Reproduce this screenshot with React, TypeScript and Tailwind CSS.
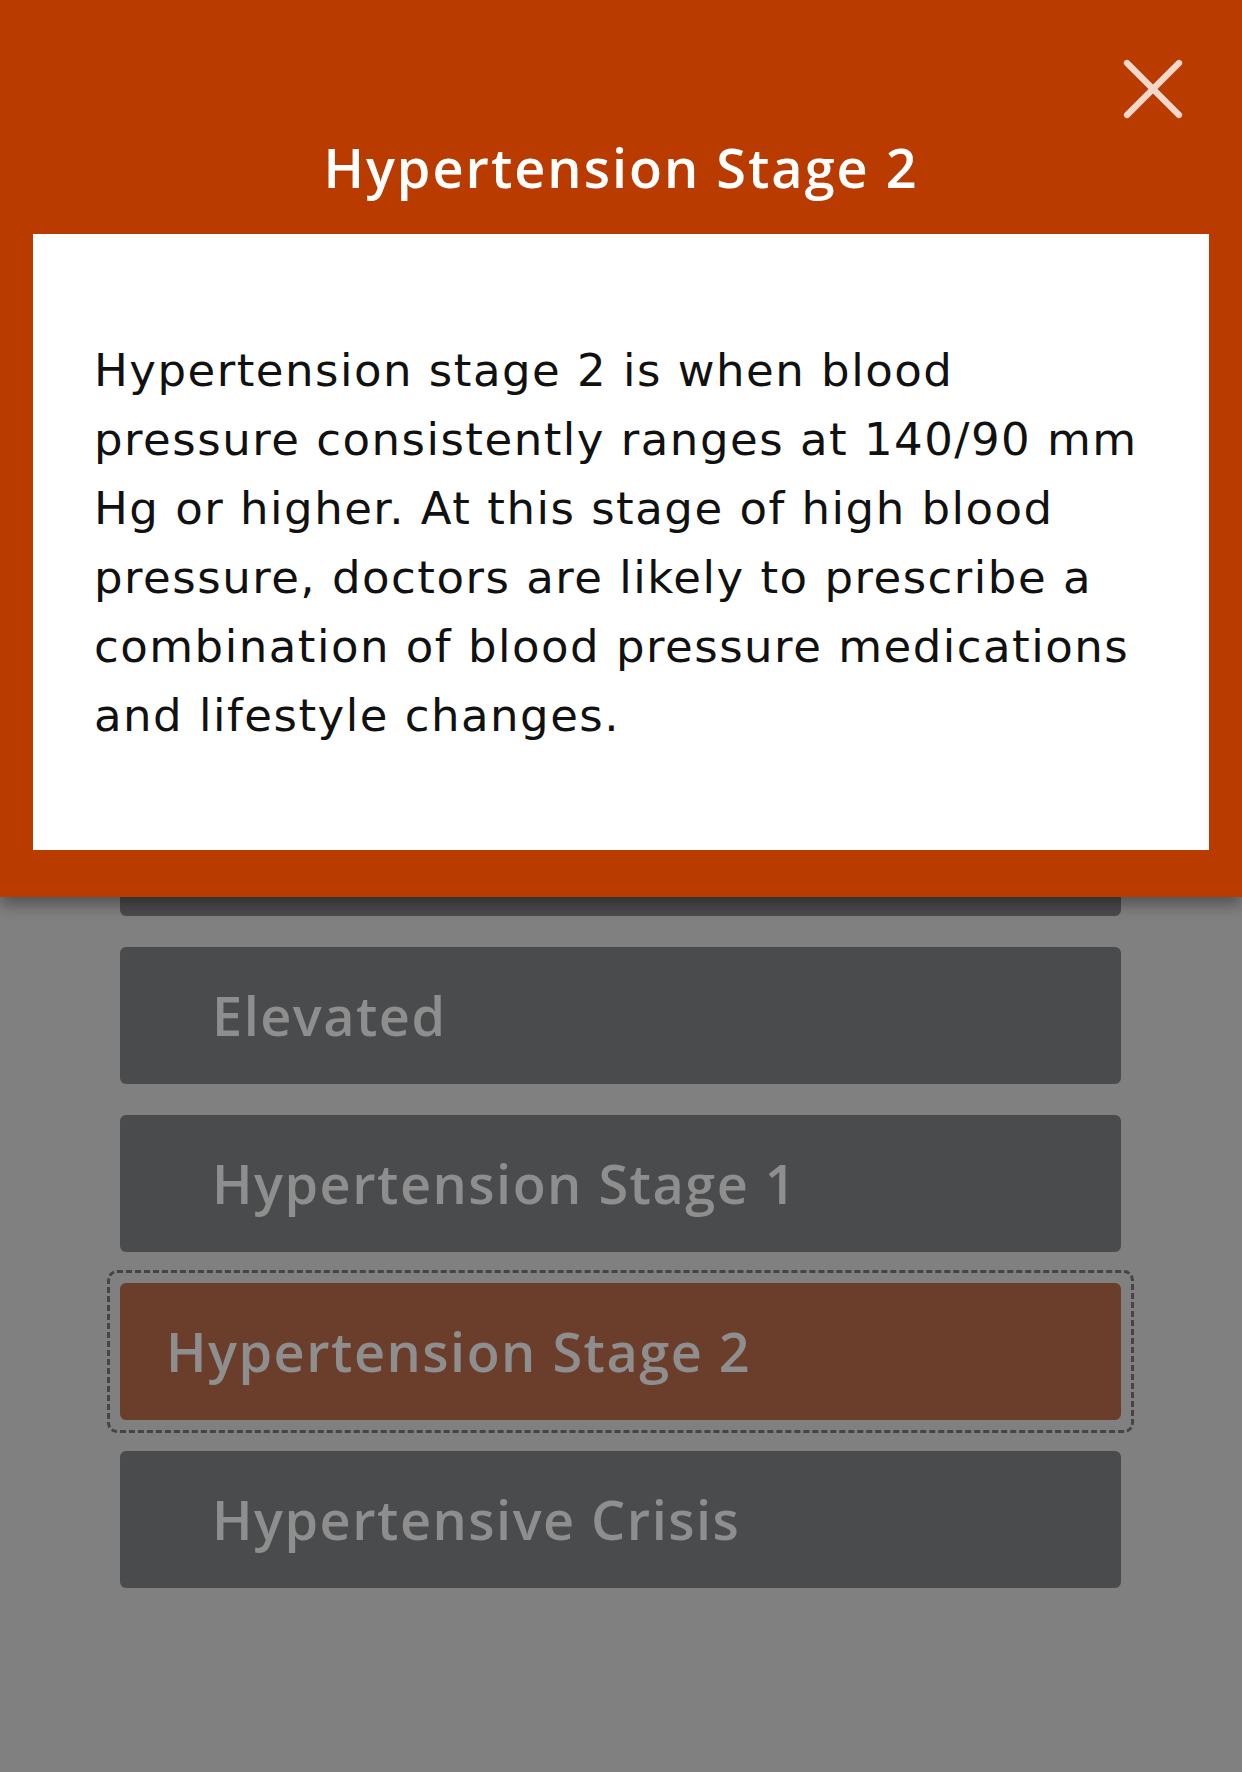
import { X } from "lucide-react"

const stages = [
  { label: "Normal", active: false },
  { label: "Elevated", active: false },
  { label: "Hypertension Stage 1", active: false },
  { label: "Hypertension Stage 2", active: true },
  { label: "Hypertensive Crisis", active: false },
]

const lines = [
  "Hypertension stage 2 is when blood",
  "pressure consistently ranges at 140/90 mm",
  "Hg or higher. At this stage of high blood",
  "pressure, doctors are likely to prescribe a",
  "combination of blood pressure medications",
  "and lifestyle changes.",
]

export default function App() {
  return (
    <div className="relative min-h-[1772px] bg-[#808080] font-['Open_Sans',sans-serif]">
      {/* dimmed page underneath */}
      <div className="flex flex-col gap-[31px] pt-[779px] pl-[120px] pr-[121px]">
        {stages.map((s) =>
          s.active ? (
            <div
              key={s.label}
              className="-mx-[13px] -my-[13px] rounded-[10px] border-[3px] border-dashed border-[#454545] p-[10px]"
            >
              <div className="flex h-[137px] items-center rounded-[6px] bg-[#6b3e2c] pl-[46px] text-[54px] font-semibold tracking-[1.5px] text-[#8e8e8e]">
                {s.label}
              </div>
            </div>
          ) : (
            <div
              key={s.label}
              className="flex h-[137px] items-center rounded-[6px] bg-[#4a4b4d] pl-[92px] text-[54px] font-semibold tracking-[1.5px] text-[#8e8e8e]"
            >
              {s.label}
            </div>
          )
        )}
      </div>

      {/* modal */}
      <div className="absolute inset-x-0 top-0 bg-[#b93b00] px-[33px] pb-[47px] shadow-[0_8px_14px_rgba(0,0,0,0.35)]">
        <button className="absolute right-[37px] top-[37px] text-[#f4d8cb]">
          <X size={104} strokeWidth={1.45} />
        </button>
        <h1 className="pt-[130px] pb-[30px] text-center text-[54px] font-semibold leading-[74px] tracking-[2px] text-white">
          Hypertension Stage 2
        </h1>
        <div className="bg-white pl-[61px] pr-[10px] pt-[102px] pb-[100px]">
          <p className="font-['DejaVu_Sans',sans-serif] text-[45px] leading-[69px] tracking-[1.5px] text-[#111]">
            {lines.map((l) => (
              <span key={l} className="block whitespace-nowrap">
                {l}
              </span>
            ))}
          </p>
        </div>
      </div>
    </div>
  )
}
